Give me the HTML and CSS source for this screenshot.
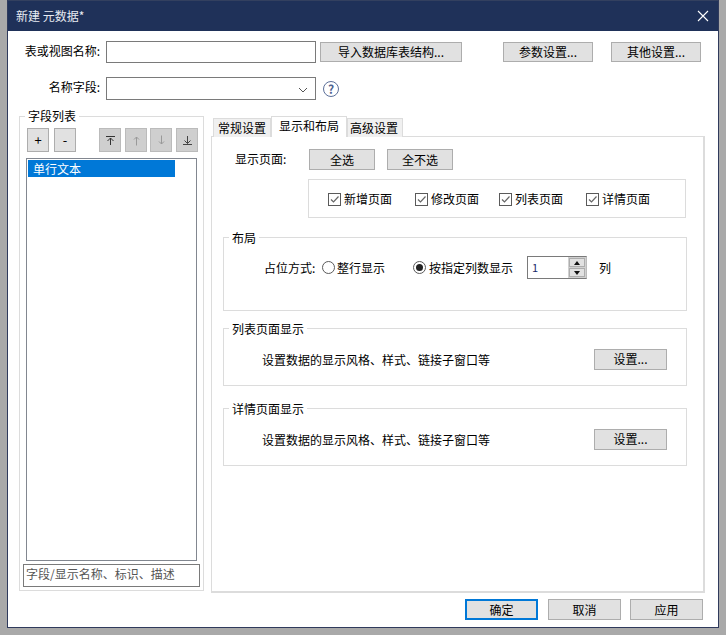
FILE: index.html
```html
<!DOCTYPE html>
<html lang="zh">
<head>
<meta charset="utf-8">
<title>新建 元数据</title>
<link rel="stylesheet" href="styles.css">
</head>
<body>
<div class="dialog">
  <div class="titlebar">
    <span>新建 元数据*</span>
    <svg class="close" width="12" height="12" viewBox="0 0 12 12"><path d="M1 1L11 11M11 1L1 11" stroke="#fff" stroke-width="1.1" fill="none"/></svg>
  </div>
  <div class="row row-name">
    <label class="form-label">表或视图名称:</label>
    <div class="field"></div>
    <button class="btn btn-import">导入数据库表结构...</button>
    <button class="btn btn-top btn-params">参数设置...</button>
    <button class="btn btn-top btn-other">其他设置...</button>
  </div>
  <div class="row row-field">
    <label class="form-label">名称字段:</label>
    <div class="field field-select">
      <svg width="10" height="6" viewBox="0 0 10 6"><path d="M1 1L5 5L9 1" stroke="#555" stroke-width="1" fill="none"/></svg>
    </div>
    <span class="help">?</span>
  </div>
  <div class="main">
    <div class="group fields">
      <span class="legend">字段列表</span>
      <div class="toolbar">
        <button class="tool">+</button>
        <button class="tool">-</button>
        <button class="tool dim first-move"><svg width="11" height="11" viewBox="0 0 11 11"><path d="M1 1.5H10M5.5 10V3M2.5 6L5.5 3L8.5 6" stroke="#333" fill="none"/></svg></button>
        <button class="tool dim"><svg width="11" height="11" viewBox="0 0 11 11"><path d="M5.5 10.500V2M3 4.500L5.500 2L8 4.500" stroke="#999" fill="none"/></svg></button>
        <button class="tool dim tight"><svg width="11" height="11" viewBox="0 0 11 11"><path d="M5.500 0.500V9M3 6.500L5.500 9L8 6.500" stroke="#999" fill="none"/></svg></button>
        <button class="tool dim"><svg width="11" height="11" viewBox="0 0 11 11"><path d="M1 9.500H10M5.500 1V8.500M2.500 5.500L5.500 8.500L8.500 5.500" stroke="#444" fill="none"/></svg></button>
      </div>
      <div class="list"><div class="list-item">单行文本</div></div>
      <div class="search">字段/显示名称、标识、描述</div>
    </div>
    <div class="tabs-col">
      <div class="tabs">
        <span class="tab tab-general">常规设置</span>
        <span class="tab tab-active">显示和布局</span>
        <span class="tab tab-advanced">高级设置</span>
      </div>
      <div class="pane">
        <div class="pages-row">
          <span class="pages-label">显示页面:</span>
          <button class="btn btn-pick">全选</button>
          <button class="btn btn-pick">全不选</button>
        </div>
        <div class="pages-box">
          <label class="check check-1"><span class="box"><svg width="11" height="11" viewBox="0 0 11 11"><path d="M2 5.500L4.500 8L9.500 2.500" stroke="#666" stroke-width="1.200" fill="none"/></svg></span>新增页面</label>
          <label class="check"><span class="box"><svg width="11" height="11" viewBox="0 0 11 11"><path d="M2 5.500L4.500 8L9.500 2.500" stroke="#666" stroke-width="1.200" fill="none"/></svg></span>修改页面</label>
          <label class="check"><span class="box"><svg width="11" height="11" viewBox="0 0 11 11"><path d="M2 5.500L4.500 8L9.500 2.500" stroke="#666" stroke-width="1.200" fill="none"/></svg></span>列表页面</label>
          <label class="check"><span class="box"><svg width="11" height="11" viewBox="0 0 11 11"><path d="M2 5.500L4.500 8L9.500 2.500" stroke="#666" stroke-width="1.200" fill="none"/></svg></span>详情页面</label>
        </div>
        <div class="group layout">
          <span class="legend">布局</span>
          <span class="occupy">占位方式:</span>
          <label class="radio-label radio-whole"><span class="radio"></span>整行显示</label>
          <label class="radio-label radio-cols"><span class="radio radio-on"></span>按指定列数显示</label>
          <div class="spinner">
            <span class="spin-value">1</span>
            <span class="spin-btns">
              <span class="spin-btn"><i class="arrow-up"></i></span>
              <span class="spin-btn"><i class="arrow-down"></i></span>
            </span>
          </div>
          <span class="unit">列</span>
        </div>
        <div class="group display display-list">
          <span class="legend">列表页面显示</span>
          <span class="display-text">设置数据的显示风格、样式、链接子窗口等</span>
          <button class="btn btn-set">设置...</button>
        </div>
        <div class="group display display-detail">
          <span class="legend">详情页面显示</span>
          <span class="display-text">设置数据的显示风格、样式、链接子窗口等</span>
          <button class="btn btn-set">设置...</button>
        </div>
      </div>
    </div>
  </div>
  <div class="footer">
    <button class="btn btn-foot btn-primary">确定</button>
    <button class="btn btn-foot">取消</button>
    <button class="btn btn-foot">应用</button>
  </div>
</div>
</body>
</html>
```
FILE: styles.css
```css
* { box-sizing: border-box; }
html, body { margin: 0; height: 100%; }
body {
  background: #a9a9a9;
  padding-left: 7px;
  font: 12px/16px "Noto Sans CJK SC", "Liberation Sans", sans-serif;
  color: #000;
  overflow: hidden;
}
.dialog {
  width: 712px;
  height: 628px;
  background: #fff;
  border: 1px solid #2f3a5c;
  border-top: 0;
  display: flex;
  flex-direction: column;
}
.titlebar {
  height: 31px;
  flex: none;
  background: #1f3159;
  color: #e8ebf2;
  display: flex;
  align-items: center;
  justify-content: space-between;
  padding: 0 9px 0 8px;
  border-top: 1px solid #33405f;
}
button { font: inherit; color: inherit; padding: 0; }
.row { display: flex; flex: none; }
.row-name { margin-top: 10px; height: 22px; }
.row-field { margin-top: 14px; height: 23px; align-items: center; }
.form-label { width: 92px; text-align: right; margin-right: 6px; line-height: 20px; align-self: flex-start; white-space: nowrap; }
.field { width: 210px; height: 100%; border: 1px solid #7a7a7a; background: #fff; }
.field-select { display: flex; align-items: center; justify-content: flex-end; padding: 2px 7px 0 0; }
.help {
  width: 16px; height: 16px; margin-left: 7px;
  border: 1.500px solid #5c6f99; border-radius: 50%;
  color: #4f6390; font-size: 12px; font-weight: 700; line-height: 13px; text-align: center;
}
.btn { background: #e1e1e1; border: 1px solid #adadad; border-radius: 0; }
.btn-import { width: 142px; height: 20px; margin: 1px 0 0 4px; line-height: 16px; }
.btn-top { width: 90px; height: 20px; margin-top: 1px; }
.btn-params { margin-left: 41px; }
.btn-other { margin-left: 18px; }
.main { display: flex; flex: none; margin: 16px 0 0 11px; height: 477px; }
.group { position: relative; border: 1px solid #dcdcdc; }
.legend { position: absolute; top: -9px; left: 5px; padding: 0 3px; background: #fff; line-height: 16px; }
.pane .legend { top: -8px; }
.fields { width: 185px; height: 475px; padding: 11px 3px 3px; display: flex; flex-direction: column; }
.toolbar { display: flex; gap: 4px; margin-left: 4px; height: 24px; flex: none; }
.tool {
  width: 22px; height: 24px; background: #e1e1e1; border: 1px solid #adadad;
  display: flex; align-items: center; justify-content: center; margin-left: 1px; font-size: 13px;
}
.toolbar .tool:first-child { margin-left: 0; }
.tool.dim { background: #cfcfcf; border-color: #bbb; margin-left: 0; }
.first-move { margin-left: 19px !important; }
.tight { margin-left: -1px !important; }
.list { height: 403px; margin: 6px 3px 0; border: 1px solid #828790; padding: 1px; flex: none; }
.list-item { width: 147px; height: 17px; background: #0078d7; color: #fff; padding-left: 5px; line-height: 17px; }
.search { height: 23px; margin-top: 3px; border: 1px solid #7a7a7a; color: #555; padding-left: 2px; line-height: 18px; flex: none; white-space: nowrap; }
.tabs-col { margin-left: 7px; width: 494px; display: flex; flex-direction: column; }
.tabs { display: flex; align-items: flex-end; height: 21px; margin-left: 2px; margin-bottom: -1px; position: relative; z-index: 1; flex: none; }
.tab { height: 19px; border: 1px solid #dcdcdc; border-bottom: 0; background: #f0f0f0; line-height: 18px; text-align: center; }
.tab-general { width: 58px; }
.tab-active { width: 76px; height: 21px; background: #fff; line-height: 17px; }
.tab-advanced { width: 56px; padding-right: 2px; }
.pane {
  height: 457px;
  border: 1px solid #dcdcdc;
  border-right-width: 2px;
  border-bottom-width: 2px;
  padding: 12px 0 0 11px;
}
.pages-row { display: flex; height: 21px; padding-left: 12px; align-items: center; }
.pages-label { width: 74px; line-height: 18px; margin-top: -2px; }
.btn-pick { width: 66px; height: 21px; margin-right: 12px; }
.pages-box {
  width: 378px; height: 39px; margin: 9px 0 0 85px;
  border: 1px solid #dcdcdc; display: flex; align-items: center; padding-left: 19px; padding-top: 1px;
}
.check { display: flex; align-items: center; width: 87px; }
.check:nth-child(2) { width: 84px; }
.check:nth-child(3) { width: 87px; }
.box { width: 13px; height: 13px; border: 1px solid #5a5a5a; margin-right: 3px; display: flex; flex: none; }
.layout { width: 464px; height: 74px; margin-top: 19px; display: flex; align-items: center; padding: 0 0 13px 40px; }
.occupy { width: 58px; }
.radio-label { display: flex; align-items: center; }
.radio { width: 13px; height: 13px; border: 1px solid #5a5a5a; border-radius: 50%; margin-right: 2px; display: block; flex: none; }
.radio-on { position: relative; }
.radio-on::after { content: ""; position: absolute; left: 2px; top: 2px; width: 7px; height: 7px; background: #222; border-radius: 50%; }
.radio-whole { width: 91px; }
.radio-cols { width: 114px; }
.radio-cols .radio { margin-right: 3px; }
.spinner { width: 60px; height: 23px; border: 1px solid #7a7a7a; border-right-color: #bbb; display: flex; justify-content: space-between; }
.spin-value { padding-left: 4px; color: #1a2a6b; line-height: 20px; font-size: 11px; }
.spin-btns { width: 18px; display: flex; flex-direction: column; gap: 1px; padding: 1px; background: #d0d0d0; }
.spin-btn { flex: 1; background: #e1e1e1; border: 1px solid #adadad; display: flex; align-items: center; justify-content: center; }
.arrow-up { width: 0; height: 0; border: 3.500px solid transparent; border-top: 0; border-bottom: 4px solid #111; }
.arrow-down { width: 0; height: 0; border: 3.500px solid transparent; border-bottom: 0; border-top: 4px solid #111; }
.unit { margin-left: 12px; }
.display { width: 464px; height: 58px; display: flex; align-items: center; justify-content: space-between; padding: 20px 19px 16px 38px; }
.display-text { padding-top: 2px; }
.display-list { margin-top: 17px; }
.display-detail { margin-top: 22px; }
.btn-set { width: 73px; height: 21px; flex: none; }
.footer { display: flex; flex: none; margin: 6px 0 0 457px; }
.btn-foot { width: 73px; height: 21px; margin-right: 10px; }
.btn-foot:nth-child(3) { margin-left: -1px; }
.btn-primary { border: 2px solid #0078d7; }
```
